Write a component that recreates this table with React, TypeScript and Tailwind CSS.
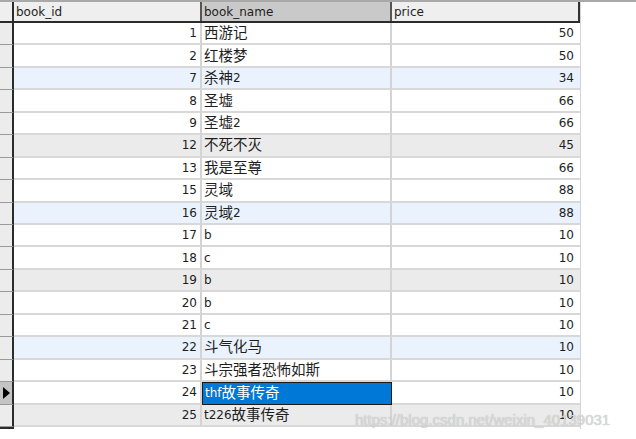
import React from 'react'

type Row = { id: number; name: string; price: number; tone: 'white' | 'blue' | 'gray' }

const rows: Row[] = [
  { id: 1, name: '西游记', price: 50, tone: 'white' },
  { id: 2, name: '红楼梦', price: 50, tone: 'white' },
  { id: 7, name: '杀神2', price: 34, tone: 'blue' },
  { id: 8, name: '圣墟', price: 66, tone: 'white' },
  { id: 9, name: '圣墟2', price: 66, tone: 'white' },
  { id: 12, name: '不死不灭', price: 45, tone: 'gray' },
  { id: 13, name: '我是至尊', price: 66, tone: 'white' },
  { id: 15, name: '灵域', price: 88, tone: 'white' },
  { id: 16, name: '灵域2', price: 88, tone: 'blue' },
  { id: 17, name: 'b', price: 10, tone: 'white' },
  { id: 18, name: 'c', price: 10, tone: 'white' },
  { id: 19, name: 'b', price: 10, tone: 'gray' },
  { id: 20, name: 'b', price: 10, tone: 'white' },
  { id: 21, name: 'c', price: 10, tone: 'white' },
  { id: 22, name: '斗气化马', price: 10, tone: 'blue' },
  { id: 23, name: '斗宗强者恐怖如斯', price: 10, tone: 'white' },
  { id: 24, name: 'thf故事传奇', price: 10, tone: 'white' },
  { id: 25, name: 't226故事传奇', price: 10, tone: 'gray' },
]

const toneBg = {
  white: 'bg-white',
  blue: 'bg-[#eaf3fd]',
  gray: 'bg-[#ebebeb]',
}

// split text so that CJK runs get the bigger size the grid shows
function Name({ text }: { text: string }) {
  const parts = text.match(/[\u4e00-\u9fff]+|[^\u4e00-\u9fff]+/g) || []
  return (
    <>
      {parts.map((p, i) =>
        /[\u4e00-\u9fff]/.test(p) ? (
          <span key={i} className="text-[14.5px]">{p}</span>
        ) : (
          <span key={i}>{p}</span>
        )
      )}
    </>
  )
}

export default function App() {
  return (
    <div
      className="relative w-[636px] h-[439px] bg-white overflow-hidden text-[12px] text-[#1e1e1e] border-t-2 border-[#a9a9a9]"
      style={{ fontFamily: 'Tahoma, "DejaVu Sans", "Noto Sans CJK SC", sans-serif' }}
    >
      <div className="w-[581px] border-r border-[#d4d4d4]">
        {/* header */}
        <div className="flex h-[21px] border-b-2 border-[#2b2b2b]">
          <div className="w-[14px] shrink-0 bg-[#efefef] border-r-2 border-[#2b2b2b]" />
          <div className="w-[188px] shrink-0 bg-[#efefef] border-r-2 border-[#555] px-[2px] flex items-center">book_id</div>
          <div className="w-[190px] shrink-0 bg-[#c9c9c9] border-r-2 border-[#555] px-[2px] flex items-center">book_name</div>
          <div className="flex-1 bg-[#efefef] border-r-2 border-[#333] px-[2px] flex items-center">price</div>
        </div>

        {/* body */}
        <div className="grid grid-rows-[repeat(18,minmax(0,1fr))] h-[404px] leading-[16px]">
          {rows.map((r) => {
            const current = r.id === 24
            return (
              <div key={r.id} className={`flex min-h-0 ${toneBg[r.tone]}`}>
                <div
                  className={`w-[14px] shrink-0 border-r-2 border-[#2b2b2b] border-b border-b-[#9a9a9a] flex items-center ${current ? 'bg-[#c4c4c4]' : 'bg-[#ececec]'}`}
                >
                  {current && (
                    <svg width="9" height="12" viewBox="0 0 9 12" className="ml-[2px]">
                      <path d="M1 0 L8 6 L1 12 Z" fill="#000" />
                    </svg>
                  )}
                </div>
                <div className="w-[188px] shrink-0 border-r-2 border-[#d4d4d4] border-b-2 border-b-[#d8d8d8] flex items-center justify-end pr-[3px]">
                  {r.id}
                </div>
                <div
                  className={`w-[190px] shrink-0 flex items-center px-[2px] ${
                    current
                      ? 'bg-[#0078d7] text-white border border-[#1a1a1a]'
                      : 'border-r-2 border-[#d4d4d4] border-b-2 border-b-[#d8d8d8]'
                  }`}
                >
                  <Name text={r.name} />
                </div>
                <div className="flex-1 border-b-2 border-[#d8d8d8] flex items-center justify-end pr-[6px]">{r.price}</div>
              </div>
            )
          })}
        </div>
        <div className="h-[2px] w-[14px] bg-[#2b2b2b]" />
      </div>

      <div
        className="absolute left-[355px] top-[407px] text-[15px] text-[#d9d9d9] select-none"
        style={{ fontFamily: '"Liberation Sans", Arial, sans-serif', textShadow: '0 0 1px rgba(140,140,140,0.6)' }}
      >
        https://blog.csdn.net/weixin_40139031
      </div>
    </div>
  )
}
